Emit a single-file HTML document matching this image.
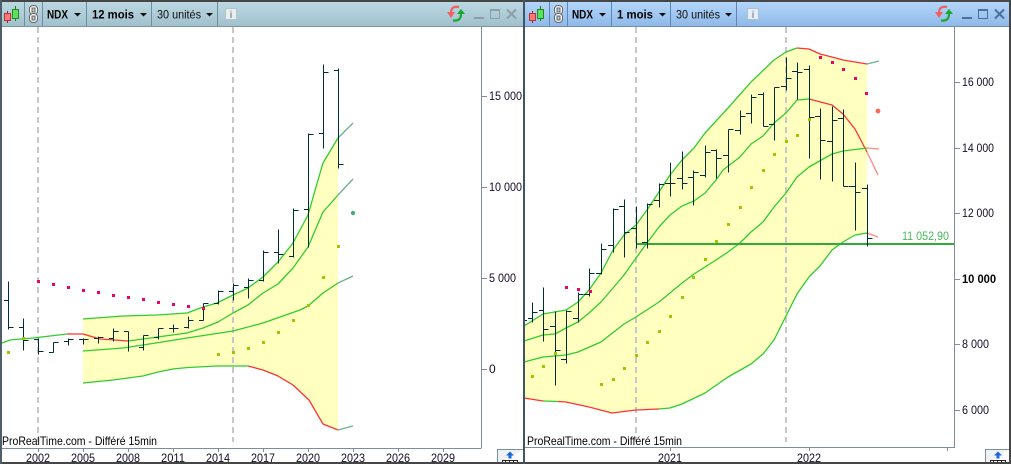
<!DOCTYPE html>
<html><head><meta charset="utf-8"><style>
html,body{margin:0;padding:0;background:#fff;width:1011px;height:464px;overflow:hidden}
svg{display:block}
text{font-family:"Liberation Sans",sans-serif;fill:#111}
.hd{font-size:12px;font-weight:bold;fill:#000}
.hn{font-size:12px}
.ax{font-size:12px;fill:#140c28}
.ft{font-size:12px;fill:#000}
</style></head><body>
<svg width="1011" height="464" viewBox="0 0 1011 464" xmlns="http://www.w3.org/2000/svg">
<defs>
<linearGradient id="gl" x1="0" y1="0" x2="0" y2="1"><stop offset="0" stop-color="#bcd8e2"/><stop offset="1" stop-color="#a0c1cd"/></linearGradient>
<linearGradient id="gr" x1="0" y1="0" x2="0" y2="1"><stop offset="0" stop-color="#b4d6fa"/><stop offset="1" stop-color="#8fb9e8"/></linearGradient>
</defs>
<rect width="1011" height="464" fill="#fff"/>

<!-- LEFT yellow -->
<path fill="#ffffbf" d="M83 319L123 316L157 315L187 313L203 307L217 303L233 295L248 288L263 277L278 262L293 243L308 215L318 180L323 163L338 138V430L323 424L309 400L293 385L278 376L263 370L248 366L217 366L188 367.5L173 369L158 372L143 376L113 380L83 383Z"/>
<!-- RIGHT yellow -->
<path fill="#ffffbf" d="M524 326L543 314L566 310L578 302L589 290L601 273L613 250L624 235L636 225L647 210L659 192L670 175L682 160L694 148L705 133L728 108L751 82L774 60L786 52L797 48L809 49L820 54L832 57L843 60L867 64V233L855 235L843 242L832 250L820 266L809 277L797 294L786 316L774 340L763 354L751 364L728 377L705 393L682 404L670 408L659 409L636 410L612 413L589 407L566 402L543 401L524 398Z"/>

<!-- dashed verticals -->
<g stroke="#c8c8c8" stroke-width="2" stroke-dasharray="6 4" fill="none" shape-rendering="crispEdges">
<path d="M38 27V442M233 27V442M636 27V442M786 27V442"/>
</g>

<!-- LEFT lines -->
<g fill="none" stroke-width="1.3" stroke-linejoin="round">
<path stroke="#2fcc2f" d="M83 319L123 316L157 315L187 313L203 307L217 303L233 295L248 288L263 277L278 262L293 243L308 215L318 180L323 163L338 138"/>
<path stroke="#6fae8c" d="M338 138L353 123"/>
<path stroke="#2fcc2f" d="M2 343L10 340L33 338L67 334"/>
<path stroke="#f33" d="M67 334L83 334L100 339L128 341"/>
<path stroke="#2fcc2f" d="M128 341L143 339L187 333L203 328L218 322L233 313L248 305L263 293L278 284L293 268L308 247L323 212L338 195"/>
<path stroke="#6fae8c" d="M338 195L353 179"/>
<path stroke="#2fcc2f" d="M83 351L123 348L143 345L187 338L233 331L263 323L300 310L308 306L323 293L338 283"/>
<path stroke="#6fae8c" d="M338 283L353 276"/>
<path stroke="#2fcc2f" d="M83 383L113 380L143 376L158 372L173 369L188 367.5L217 366L248 366"/>
<path stroke="#f33" d="M248 366L263 370L278 376L293 385L309 400L323 424L338 430"/>
<path stroke="#6fae8c" d="M338 430L353 426"/>
</g>

<!-- RIGHT lines -->
<g fill="none" stroke-width="1.3" stroke-linejoin="round">
<path stroke="#2fcc2f" d="M524 326L543 314L566 310L578 302L589 290L601 273L613 250L624 235L636 225L647 210L659 192L670 175L682 160L694 148L705 133L728 108L751 82L774 60L786 52L797 48"/>
<path stroke="#f33" d="M797 48L809 49L820 54L832 57L843 60L867 64"/>
<path stroke="#6fae8c" d="M867 64L879 61"/>
<path stroke="#2fcc2f" d="M524 341L543 335L555 334L566 328L578 322L589 313L601 302L613 288L624 275L636 258L647 243L659 227L670 215L682 206L694 201L705 193L716 180L723 170L740 157L751 144L763 136L774 123L786 113L797 100L809 99"/>
<path stroke="#f33" d="M809 99L832 105L843 114L855 129L867 152"/>
<path stroke="#ff8a7a" d="M867 152L878 175"/>
<path stroke="#2fcc2f" d="M524 362L543 357L566 355L578 352L601 342L624 324L636 317L659 302L670 293L682 283L694 274L705 267L716 260L728 252L740 243L751 232L763 222L774 207L786 193L797 177L809 167L832 154L843 151L867 148"/>
<path stroke="#ff8a7a" d="M867 148L879 149"/>
<path stroke="#f33" d="M524 398L543 401"/>
<path stroke="#2fcc2f" d="M543 401L558 401.5"/>
<path stroke="#f33" d="M558 401.5L566 402L589 407L612 413L636 410L659 409"/>
<path stroke="#2fcc2f" d="M659 409L670 408L682 404L705 393L728 377L751 364L763 354L774 340L786 316L797 294L809 277L820 266L832 250L843 242L855 235L867 233"/>
<path stroke="#ff8a7a" d="M867 233L878 237"/>
</g>

<!-- horizontal price line -->
<rect x="636" y="243" width="318" height="2" fill="#33aa33"/>
<text x="902" y="240" font-size="12" style="fill:#44bb55" textLength="47" lengthAdjust="spacingAndGlyphs">11 052,90</text>

<!-- LEFT bars -->
<path transform="translate(0 .5)" fill="none" stroke="#002e33" stroke-width="1.2" shape-rendering="crispEdges" d="
M8.5 281V329M4 300h4.5M8.5 327h5
M23.5 318V350M19 327h4.5M23.5 340h5
M38.5 338V354M34 339h4.5M38.5 351h5
M53.5 342V352M49 352h4.5M53.5 342h5
M68.5 338V345M64 341h4.5M68.5 339h5
M83.5 338V344M79 339h9.5
M98.5 336V343M94 338h4.5M98.5 337h5
M113.5 328V341M109 338h4.5M113.5 331h5
M128.5 331V351M124 331h4.5
M143.5 335V350M139 347h4.5M143.5 335h5
M158.5 328V339M154 337h4.5M158.5 328h5
M173.5 324V332M169 328h9.5
M188.5 316V328M184 327h4.5M188.5 320h5
M203.5 303V320M199 320h4.5M203.5 303h5
M218.5 290V304M214 303h4.5M218.5 291h5
M233.5 283V300M229 291h4.5M233.5 285h5
M248.5 278V298M244 287h4.5M248.5 280h5
M263.5 250V281M259 280h4.5M263.5 252h5
M278.5 229V263M274 252h4.5M278.5 254h5
M293.5 208V257M289 256h4.5M293.5 210h5
M308.5 133V247M304 209h4.5M308.5 134h5
M323.5 64V148M319 133h4.5M323.5 72h5
M338.5 68V168M334 70h4.5M338.5 164h5"/>

<!-- RIGHT bars -->
<path transform="translate(0 .5)" fill="none" stroke="#002e33" stroke-width="1.2" shape-rendering="crispEdges" d="
M525 320h2
M532.5 302V322M528 318h4.5M532.5 312h5
M543.5 287V341M539 310h4.5M543.5 329h5
M555.5 311V385M550 326h5.5M555.5 350h5
M566.5 310V363M561 359h5.5M566.5 311h5
M578.5 292V322M573 318h5.5M578.5 294h5
M589.5 268V296M584 294h5.5M589.5 273h5
M601.5 243V274M596 273h5.5M601.5 249h5
M613.5 208V252M608 245h5.5M613.5 209h5
M624.5 199V257M619 206h5.5M624.5 232h5
M636.5 206V248M631 228h5.5
M647.5 203V248M642 242h5.5M647.5 204h5
M659.5 183V207M654 200h5.5M659.5 184h5
M670.5 162V196M665 183h5.5M670.5 183h5
M682.5 151V189M677 178h5.5M682.5 183h5
M693.5 170V205M688 177h5.5M693.5 172h5
M705.5 145V177M700 175h5.5M705.5 152h5
M716.5 149V178M711 150h5.5M716.5 158h5
M728.5 129V172M723 155h5.5M728.5 129h5
M740.5 110V134M735 130h5.5M740.5 116h5
M751.5 94V123M746 113h5.5M751.5 97h5
M763.5 92V126M758 94h5.5M763.5 126h5
M774.5 87V140M769 124h5.5M774.5 87h5
M786.5 57V90M781 86h5.5M786.5 78h5
M797.5 62V99M792 71h5.5M797.5 72h5
M809.5 65V158M804 69h5.5M809.5 117h5
M820.5 108V179M815 116h5.5M820.5 140h5
M832.5 106V181M827 141h5.5M832.5 120h5
M843.5 109V186M838 118h5.5M843.5 186h5
M855.5 162V230M849 186h6.5M855.5 192h5
M867.5 184V246M862 188h5.5M867.5 238h5"/>

<!-- dots -->
<g fill="#f0006a">
<rect x="37" y="280" width="3" height="3"/><rect x="52" y="283" width="3" height="3"/><rect x="67" y="286" width="3" height="3"/><rect x="82" y="289" width="3" height="3"/><rect x="97" y="291" width="3" height="3"/><rect x="112" y="294" width="3" height="3"/><rect x="127" y="296" width="3" height="3"/><rect x="142" y="298" width="3" height="3"/><rect x="157" y="301" width="3" height="3"/><rect x="172" y="303" width="3" height="3"/><rect x="187" y="305" width="3" height="3"/><rect x="202" y="307" width="3" height="3"/>
<rect x="565" y="286" width="3" height="3"/><rect x="577" y="288" width="3" height="3"/><rect x="589" y="290" width="3" height="3"/>
<rect x="819" y="56" width="3" height="3"/><rect x="831" y="61" width="3" height="3"/><rect x="842" y="68" width="3" height="3"/><rect x="854" y="77" width="3" height="3"/><rect x="865" y="92" width="3" height="3"/>
</g>
<g fill="#9cc800">
<rect x="7" y="351" width="3" height="3"/><rect x="22" y="337" width="3" height="3"/><rect x="217" y="353" width="3" height="3"/><rect x="232" y="351" width="3" height="3"/><rect x="247" y="347" width="3" height="3"/><rect x="262" y="341" width="3" height="3"/><rect x="277" y="331" width="3" height="3"/><rect x="292" y="319" width="3" height="3"/><rect x="307" y="304" width="3" height="3"/><rect x="322" y="276" width="3" height="3"/><rect x="337" y="245" width="3" height="3"/>
<rect x="531" y="375" width="3" height="3"/><rect x="542" y="365" width="3" height="3"/><rect x="554" y="352" width="3" height="3"/><rect x="600" y="383" width="3" height="3"/><rect x="612" y="378" width="3" height="3"/><rect x="623" y="367" width="3" height="3"/><rect x="635" y="354" width="3" height="3"/><rect x="646" y="341" width="3" height="3"/><rect x="658" y="330" width="3" height="3"/><rect x="669" y="315" width="3" height="3"/><rect x="681" y="296" width="3" height="3"/><rect x="692" y="276" width="3" height="3"/><rect x="704" y="258" width="3" height="3"/><rect x="715" y="240" width="3" height="3"/><rect x="727" y="223" width="3" height="3"/><rect x="739" y="206" width="3" height="3"/><rect x="750" y="186" width="3" height="3"/><rect x="762" y="169" width="3" height="3"/><rect x="773" y="153" width="3" height="3"/><rect x="785" y="140" width="3" height="3"/><rect x="796" y="134" width="3" height="3"/><rect x="808" y="118" width="3" height="3"/>
</g>
<circle cx="353" cy="213" r="2.2" fill="#4aaa77"/>
<circle cx="878" cy="111" r="2.4" fill="#ff6655"/>

<!-- axes -->
<g stroke="#7a8e9b" stroke-width="1" fill="none" shape-rendering="crispEdges">
<path d="M481.5 27V448M0 448.5H481.5"/>
<path d="M954.5 27V448M525 447.5H954.5"/>
<path d="M481 96.5h6M481 187.5h6M481 278.5h6M481 369.5h6"/>
<path d="M954 82.5h6M954 148.5h6M954 213.5h6M954 279.5h6M954 344.5h6M954 410.5h6"/>
<path d="M38.5 448v4M83.5 448v4M128.5 448v4M173.5 448v4M218.5 448v4M263.5 448v4M308.5 448v4M353.5 448v4M398.5 448v4M443.5 448v4"/>
<path d="M670.5 447v4M809.5 447v4M947.5 447v4"/>
</g>

<!-- axis labels -->
<text class="ax" x="489" y="100" textLength="33" lengthAdjust="spacingAndGlyphs">15 000</text>
<text class="ax" x="489" y="191" textLength="33" lengthAdjust="spacingAndGlyphs">10 000</text>
<text class="ax" x="489" y="282" textLength="27" lengthAdjust="spacingAndGlyphs">5 000</text>
<text class="ax" x="489" y="373">0</text>
<text class="ax" x="962" y="86" textLength="32" lengthAdjust="spacingAndGlyphs">16 000</text>
<text class="ax" x="962" y="152" textLength="32" lengthAdjust="spacingAndGlyphs">14 000</text>
<text class="ax" x="962" y="217" textLength="32" lengthAdjust="spacingAndGlyphs">12 000</text>
<text class="ax" x="962" y="283" textLength="34" lengthAdjust="spacingAndGlyphs" style="font-weight:bold;fill:#000">10 000</text>
<text class="ax" x="962" y="348" textLength="27" lengthAdjust="spacingAndGlyphs">8 000</text>
<text class="ax" x="962" y="414" textLength="27" lengthAdjust="spacingAndGlyphs">6 000</text>

<text class="ax" x="26" y="462" textLength="24" lengthAdjust="spacingAndGlyphs">2002</text>
<text class="ax" x="71" y="462" textLength="24" lengthAdjust="spacingAndGlyphs">2005</text>
<text class="ax" x="116" y="462" textLength="24" lengthAdjust="spacingAndGlyphs">2008</text>
<text class="ax" x="161" y="462" textLength="24" lengthAdjust="spacingAndGlyphs">2011</text>
<text class="ax" x="206" y="462" textLength="24" lengthAdjust="spacingAndGlyphs">2014</text>
<text class="ax" x="251" y="462" textLength="24" lengthAdjust="spacingAndGlyphs">2017</text>
<text class="ax" x="296" y="462" textLength="24" lengthAdjust="spacingAndGlyphs">2020</text>
<text class="ax" x="341" y="462" textLength="24" lengthAdjust="spacingAndGlyphs">2023</text>
<text class="ax" x="386" y="462" textLength="24" lengthAdjust="spacingAndGlyphs">2026</text>
<text class="ax" x="431" y="462" textLength="24" lengthAdjust="spacingAndGlyphs">2029</text>
<text class="ax" x="658" y="462" textLength="24" lengthAdjust="spacingAndGlyphs">2021</text>
<text class="ax" x="797" y="462" textLength="24" lengthAdjust="spacingAndGlyphs">2022</text>

<text class="ft" x="2" y="445" textLength="155" lengthAdjust="spacingAndGlyphs">ProRealTime.com - Différé 15min</text>
<text class="ft" x="527" y="445" textLength="155" lengthAdjust="spacingAndGlyphs">ProRealTime.com - Différé 15min</text>

<!-- corner buttons -->
<path d="M497.5 464V449.5H523" fill="#eef2f5" stroke="#7a8e9b"/>
<path d="M510 451.5l4 4h-2.5v3h-3v-3H506z" fill="#1b66d8"/>
<rect x="502.5" y="460.5" width="15" height="4" fill="#fff" stroke="#222"/>
<path d="M505.5 460v3M509.5 460v3M513.5 460v3" stroke="#222"/>
<path d="M985.5 464V449.5H1009" fill="#eef2f5" stroke="#7a8e9b"/>
<path d="M998 451.5l4 4h-2.5v3h-3v-3H994z" fill="#1b66d8"/>
<rect x="990.5" y="460.5" width="15" height="4" fill="#fff" stroke="#222"/>
<path d="M993.5 460v3M997.5 460v3M1001.5 460v3" stroke="#222"/>

<!-- HEADERS -->
<rect x="0" y="2" width="523" height="24" fill="url(#gl)"/>
<rect x="525" y="2" width="484" height="24" fill="url(#gr)"/>
<rect x="0" y="26" width="523" height="1" fill="#7a96a3"/>
<rect x="525" y="26" width="484" height="1" fill="#6e8fb5"/>

<g stroke="#6f8d9b" shape-rendering="crispEdges">
<path d="M24.5 2V26M42.5 2V26M86.5 2V26M151.5 2V26M217.5 2V26"/>
</g>
<g stroke="#5f86b2" shape-rendering="crispEdges">
<path d="M549.5 2V26M567.5 2V26M611.5 2V26M670.5 2V26M736.5 2V26"/>
</g>

<!-- candle icons -->
<g shape-rendering="crispEdges">
<path d="M7.5 11V23" stroke="#a02020"/><path d="M15.5 6V21" stroke="#1f7a1f"/>
<rect x="4.5" y="13.5" width="6" height="7" fill="#f77" stroke="#b33"/>
<rect x="12.5" y="9.5" width="6" height="9" fill="#5de05d" stroke="#1f8a1f"/>
<path d="M532.5 11V23" stroke="#a02020"/><path d="M540.5 6V21" stroke="#1f7a1f"/>
<rect x="529.5" y="13.5" width="6" height="7" fill="#f77" stroke="#b33"/>
<rect x="537.5" y="9.5" width="6" height="9" fill="#5de05d" stroke="#1f8a1f"/>
</g>
<!-- link icons -->
<g fill="#fff" stroke="#666" stroke-width="1">
<rect x="29.5" y="5.5" width="8" height="9" rx="3.5"/><rect x="29.5" y="13.5" width="8" height="9" rx="3.5"/>
<rect x="32" y="8" width="3" height="4" fill="#b0ccd6"/><rect x="32" y="16" width="3" height="4" fill="#b0ccd6"/>
<rect x="554.5" y="5.5" width="8" height="9" rx="3.5"/><rect x="554.5" y="13.5" width="8" height="9" rx="3.5"/>
<rect x="557" y="8" width="3" height="4" fill="#a4c8f0"/><rect x="557" y="16" width="3" height="4" fill="#a4c8f0"/>
</g>

<!-- header text -->
<text class="hd" x="47" y="18.5" textLength="21" lengthAdjust="spacingAndGlyphs">NDX</text>
<path d="M74 13h7l-3.5 3.5z" fill="#111"/>
<text class="hd" x="92" y="18.5" textLength="42" lengthAdjust="spacingAndGlyphs">12 mois</text>
<path d="M140 13h7l-3.5 3.5z" fill="#111"/>
<text class="hn" x="157" y="18.5" textLength="44" lengthAdjust="spacingAndGlyphs">30 unités</text>
<path d="M206 13h7l-3.5 3.5z" fill="#111"/>
<rect x="225.5" y="8.5" width="11" height="11" fill="#e6eef0" stroke="#b5c4ca"/>
<text x="231" y="18" text-anchor="middle" font-size="10" font-weight="bold" style="fill:#8a9aa2">i</text>

<text class="hd" x="572" y="18.5" textLength="21" lengthAdjust="spacingAndGlyphs">NDX</text>
<path d="M599 13h7l-3.5 3.5z" fill="#111"/>
<text class="hd" x="617" y="18.5" textLength="36" lengthAdjust="spacingAndGlyphs">1 mois</text>
<path d="M659 13h7l-3.5 3.5z" fill="#111"/>
<text class="hn" x="676" y="18.5" textLength="44" lengthAdjust="spacingAndGlyphs">30 unités</text>
<path d="M725 13h7l-3.5 3.5z" fill="#111"/>
<rect x="747.5" y="8.5" width="11" height="11" fill="#e6eef6" stroke="#aebfd4"/>
<text x="753" y="18" text-anchor="middle" font-size="10" font-weight="bold" style="fill:#8a9ab2">i</text>

<!-- refresh icons -->
<g fill="none" stroke-width="2.2">
<path d="M459 7Q451 5.5 451 13" stroke="#f06060"/>
<path d="M447 12h8l-4 6z" fill="#f06060" stroke="none"/>
<path d="M453 20.5Q461 21.5 461 14" stroke="#18a830"/>
<path d="M457 14h8l-4-5z" fill="#18a830" stroke="none"/>
<path d="M947 7Q939 5.5 939 13" stroke="#f06060"/>
<path d="M935 12h8l-4 6z" fill="#f06060" stroke="none"/>
<path d="M941 20.5Q949 21.5 949 14" stroke="#18a830"/>
<path d="M945 14h8l-4-5z" fill="#18a830" stroke="none"/>
</g>
<!-- window controls -->
<g stroke="#8c9fa8" fill="none" shape-rendering="crispEdges">
<rect x="474" y="17" width="10" height="2" fill="#8c9fa8" stroke="none"/>
<rect x="490.5" y="9.5" width="9" height="9"/><path d="M490 10.5h10"/>
</g>
<path d="M507 9.5l9 9M516 9.5l-9 9" stroke="#8c9fa8" stroke-width="2" fill="none"/>
<g stroke="#4a7299" fill="none" shape-rendering="crispEdges">
<rect x="962" y="17" width="10" height="2" fill="#4a7299" stroke="none"/>
<rect x="978.5" y="9.5" width="9" height="9"/><path d="M978 10.5h10"/>
</g>
<path d="M995 9.5l9 9M1004 9.5l-9 9" stroke="#4a7299" stroke-width="2" fill="none"/>

<!-- frame -->
<rect x="0" y="0" width="1011" height="2" fill="#464646"/>
<rect x="0" y="462" width="1011" height="2" fill="#464646"/>
<rect x="0" y="0" width="2" height="464" fill="#4f5f6a"/>
<rect x="1009" y="0" width="2" height="464" fill="#464646"/>
<rect x="523" y="0" width="2" height="464" fill="#3f5566"/>
</svg>
</body></html>
